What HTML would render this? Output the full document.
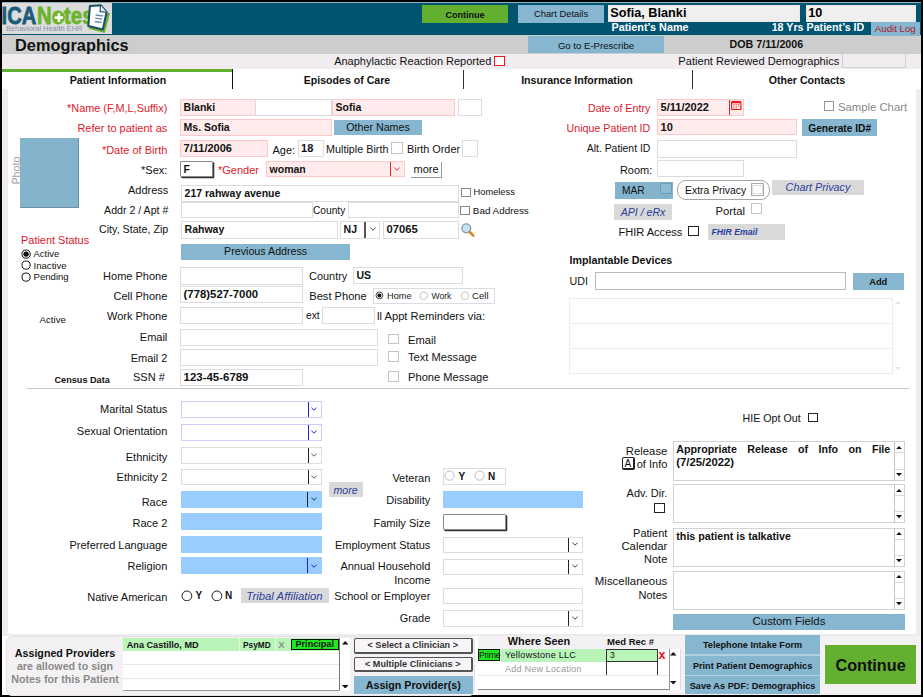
<!DOCTYPE html><html><head><meta charset="utf-8"><title>Demographics</title><style>
html,body{margin:0;padding:0;background:#000;}
body{width:923px;height:697px;position:relative;overflow:hidden;font-family:"Liberation Sans",sans-serif;color:#111;}
.a{position:absolute;box-sizing:content-box;}
.t{white-space:nowrap;}
.b{font-weight:bold;}
.i{font-style:italic;}
.w{color:#fff;}
.r{color:#e0182d;}
.bl{color:#2b3d9c;}
.f{border:1px solid #dcdce0;background:#fff;padding:0;text-indent:2.6px;white-space:nowrap;overflow:hidden;}
.p{background:#ffebeb;border-color:#fcc8c8;}
.hf{border:1px solid #e8e8e8;background:#efefef;text-indent:1.3px;font-weight:bold;white-space:nowrap;overflow:hidden;color:#000}
.inset{border:1px solid #8a8a8a;box-shadow:1.3px 1.3px 0 #333;background:#fff;text-indent:2.5px;white-space:nowrap;margin:0;border-radius:1px}
.btn{text-align:center;white-space:nowrap;overflow:hidden;}
.bb{background:#86b6d0;}
.bg{background:#63af30;}
.ta{border:1px solid #d2d2d2;background:#fff;overflow:hidden;}
.tat{position:absolute;left:2.5px;top:1px;width:214px;font-size:10.7px;font-weight:bold;line-height:13.5px;text-align:justify;text-align-last:justify;}
</style></head><body>
<div class="a " style="left:0px;top:0px;width:923px;height:697px;background:#000"></div>
<div class="a " style="left:2px;top:2px;width:919px;height:692.5px;background:#fff"></div>
<div class="a " style="left:2px;top:2px;width:919px;height:33px;background:#00546f"></div>
<div class="a " style="left:2px;top:2px;width:919px;height:1px;background:#8fb0bd"></div>
<div class="a " style="left:2px;top:35px;width:919px;height:19px;background:#cdcdcd"></div>
<div class="a " style="left:2px;top:54px;width:919px;height:15px;background:#f0ecf0"></div>
<div class="a " style="left:2px;top:89px;width:6px;height:605.5px;background:#f0ecf0"></div>
<div class="a " style="left:916px;top:89px;width:5px;height:547px;background:#f0ecf0"></div>
<div class="a " style="left:2px;top:634px;width:919px;height:2px;background:#ececec"></div>
<div class="a " style="left:2px;top:3px;width:110px;height:30.5px;background:#dcdcdc"></div>
<svg class="a" style="left:2px;top:3px" width="110" height="31" viewBox="2 3 110 31">
<g font-family="Liberation Sans, sans-serif" font-weight="bold" font-size="23.6">
<text x="1.6" y="24" fill="#1b5b79" stroke="#1b5b79" stroke-width="0.8" textLength="34.6" lengthAdjust="spacingAndGlyphs">ICA</text>
<text x="37" y="24" fill="#6cb42c" stroke="#6cb42c" stroke-width="0.8" textLength="56.5" lengthAdjust="spacingAndGlyphs">Notes</text>
</g>
<circle cx="58.9" cy="17.6" r="6" fill="#6cb42c"/>
<path d="M54.7 17.6h8.4M58.9 13.2v8.8" stroke="#fff" stroke-width="2.7"/>
<text x="5.9" y="30.8" font-family="Liberation Sans, sans-serif" font-size="7.6" fill="#8d8fab" textLength="76.5" lengthAdjust="spacingAndGlyphs">Behavioral Health EHR</text>
<path d="M107.5 12.5 L110 13.2 L104.8 33 L88.5 28.8 L89 27" fill="#6cb42c"/>
<path d="M89.9 6 L100.6 5.2 L106.6 12.3 L102.8 29.4 L88.3 26 Z" fill="#fff" stroke="#1a4f6e" stroke-width="2.1" stroke-linejoin="round"/>
<path d="M100.6 5.2 L100 11.6 L106.6 12.3" fill="#e4ecf2" stroke="#1a4f6e" stroke-width="1.1" stroke-linejoin="round"/>
<path d="M95.6 15 L102.8 16 M95.2 18.2 L102.2 19.2 M94.8 21.5 L101.6 22.5" stroke="#5f8fb6" stroke-width="1.3"/>
</svg>
<div class="a btn bg b" style="left:422px;top:4.5px;width:86px;height:18.8px;line-height:18.8px;font-size:9px;line-height:20px">Continue</div>
<div class="a btn bb" style="left:518px;top:4.5px;width:86px;height:18.8px;line-height:18.8px;font-size:9.4px;">Chart Details</div>
<div class="a hf" style="left:608px;top:4.5px;width:190px;height:15px;line-height:15px;font-size:12.7px;">Sofia, Blanki</div>
<div class="a hf" style="left:806px;top:4.5px;width:108px;height:15px;line-height:15px;font-size:12.7px;">10</div>
<div class="a t b w" style="left:611.5px;top:20.3px;height:14px;line-height:14px;font-size:10.8px;">Patient’s Name</div>
<div class="a t b w" style="right:58.7px;top:20.3px;height:14px;line-height:14px;font-size:10.7px;">18 Yrs Patient’s ID</div>
<div class="a btn bb" style="left:871px;top:22px;width:48.5px;height:13.5px;line-height:13.5px;font-size:9.7px;color:#b01828">Audit Log</div>
<div class="a t b" style="left:15px;top:37.5px;height:14px;line-height:14px;font-size:16.3px;height:20px;line-height:20px;top:35px;color:#111;letter-spacing:0.05px">Demographics</div>
<div class="a btn bb" style="left:528px;top:36px;width:136px;height:17px;line-height:17px;font-size:9.6px;line-height:19px">Go to E-Prescribe</div>
<div class="a t b" style="left:729.5px;top:37px;height:14px;line-height:14px;font-size:10.7px;">DOB 7/11/2006</div>
<div class="a t " style="right:431.7px;top:54px;height:14px;line-height:14px;font-size:11px;">Anaphylactic Reaction Reported</div>
<div class="a" style="left:494px;top:56px;width:8.6px;height:8.4px;border:1.4px solid #f01818;background:#fff"></div>
<div class="a t " style="right:83.7px;top:54px;height:14px;line-height:14px;font-size:11.1px;">Patient Reviewed Demographics</div>
<div class="a" style="left:841.5px;top:53px;width:62px;height:13px;border:1px solid #cfcfcf;background:#f0ecf0"></div>
<div class="a " style="left:2px;top:69px;width:230px;height:2.5px;background:#63af30"></div>
<div class="a " style="left:232px;top:69px;width:1px;height:20px;background:#111"></div>
<div class="a " style="left:462.5px;top:69.5px;width:1px;height:19px;background:#333"></div>
<div class="a " style="left:692px;top:69.5px;width:1px;height:19px;background:#333"></div>
<div class="a t b" style="left:-32px;width:300px;text-align:center;top:73.2px;height:14px;line-height:14px;font-size:10.6px;">Patient Information</div>
<div class="a t b" style="left:197px;width:300px;text-align:center;top:73.2px;height:14px;line-height:14px;font-size:10.6px;">Episodes of Care</div>
<div class="a t b" style="left:427px;width:300px;text-align:center;top:73.2px;height:14px;line-height:14px;font-size:10.65px;">Insurance Information</div>
<div class="a t b" style="left:657px;width:300px;text-align:center;top:73.2px;height:14px;line-height:14px;font-size:10.6px;">Other Contacts</div>
<div class="a t r" style="right:755.7px;top:101px;height:14px;line-height:14px;font-size:10.9px;">*Name (F,M,L,Suffix)</div>
<div class="a t r" style="right:755.7px;top:121px;height:14px;line-height:14px;font-size:11px;">Refer to patient as</div>
<div class="a t r" style="right:755.7px;top:142.5px;height:14px;line-height:14px;font-size:11px;">*Date of Birth</div>
<div class="a t " style="right:755.7px;top:162.5px;height:14px;line-height:14px;font-size:11px;color:#111">*Sex:</div>
<div class="a t " style="right:754.7px;top:182.5px;height:14px;line-height:14px;font-size:11px;">Address</div>
<div class="a t " style="right:754.7px;top:202.5px;height:14px;line-height:14px;font-size:10.6px;">Addr 2 / Apt #</div>
<div class="a t " style="right:754.7px;top:222.3px;height:14px;line-height:14px;font-size:10.7px;">City, State, Zip</div>
<div class="a f p b" style="left:180px;top:99.2px;width:73.5px;height:14.8px;line-height:14.8px;font-size:10.5px;">Blanki</div>
<div class="a f" style="left:255px;top:99.2px;width:75px;height:14.8px;line-height:14.8px;font-size:10.5px;"></div>
<div class="a f p b" style="left:332px;top:99.2px;width:121px;height:14.8px;line-height:14.8px;font-size:10.5px;">Sofia</div>
<div class="a f" style="left:458px;top:99.2px;width:22px;height:14.8px;line-height:14.8px;font-size:10.5px;"></div>
<div class="a f p b" style="left:180px;top:119.2px;width:150px;height:14.8px;line-height:14.8px;font-size:10.5px;">Ms. Sofia</div>
<div class="a btn bb" style="left:334px;top:119.5px;width:88px;height:15.8px;line-height:15.8px;font-size:10.7px;">Other Names</div>
<div class="a f p b" style="left:180px;top:140.4px;width:86px;height:15.1px;line-height:15.1px;font-size:11px;">7/11/2006</div>
<div class="a t " style="left:272.5px;top:143px;height:14px;line-height:14px;font-size:11px;">Age:</div>
<div class="a f b" style="left:297.5px;top:140.4px;width:24px;height:15.1px;line-height:15.1px;font-size:11px;">18</div>
<div class="a t " style="left:326px;top:141.5px;height:14px;line-height:14px;font-size:10.8px;">Multiple Birth</div>
<div class="a" style="left:391.4px;top:142.3px;width:9.6px;height:9.3px;border:1px solid #c4c4c4;background:#fff"></div>
<div class="a t " style="left:407px;top:141.8px;height:14px;line-height:14px;font-size:10.85px;">Birth Order</div>
<div class="a f" style="left:462px;top:140.4px;width:14px;height:15.1px;line-height:15.1px;font-size:10.5px;"></div>
<div class="a inset b" style="left:180px;top:160.5px;width:30.5px;height:14px;line-height:14px;font-size:10.5px;line-height:15.5px">F</div>
<div class="a t r" style="left:218px;top:163px;height:14px;line-height:14px;font-size:11px;">*Gender</div>
<div class="a f p b" style="left:266px;top:160.5px;width:137px;height:14.5px;line-height:14.5px;font-size:10.5px;">woman</div>
<div class="a " style="left:389.8px;top:161.5px;width:1px;height:14.5px;background:#e03030"></div>
<svg class="a" style="left:394px;top:166.55px" width="6" height="4" viewBox="0 0 6 4"><path d="M0.4 0.7 L3 3.2 L5.6 0.7" fill="none" stroke="#e03030" stroke-width="1"/></svg>
<div class="a t" style="left:411px;top:162px;width:30px;height:14.5px;line-height:15.5px;font-size:11px;text-align:center;border-right:1px solid #999;border-bottom:1px solid #999;">more</div>
<div class="a " style="left:19.5px;top:138px;width:59.5px;height:69.5px;background:#84b4cc;box-shadow:inset -1px -1px 0 #6f8fa2"></div>
<div class="a t" style="left:-4px;top:164px;width:40px;height:13px;line-height:13px;text-align:center;font-size:10.8px;color:#a2a2a2;transform:rotate(-90deg)">Photo</div>
<div class="a f b" style="left:181px;top:185.3px;width:275.6px;height:14.5px;line-height:14.5px;font-size:10.5px;line-height:15.5px">217 rahway avenue</div>
<div class="a" style="left:461px;top:187.5px;width:7.5px;height:7.5px;border:1px solid #888;background:#fff"></div>
<div class="a t " style="left:473.5px;top:185px;height:14px;line-height:14px;font-size:9.3px;">Homeless</div>
<div class="a f" style="left:181px;top:202.3px;width:130px;height:13.5px;line-height:13.5px;font-size:10.5px;"></div>
<div class="a t " style="left:313px;top:203.5px;height:14px;line-height:14px;font-size:10.2px;">County</div>
<div class="a f" style="left:348px;top:202.3px;width:108.6px;height:13.5px;line-height:13.5px;font-size:10.5px;"></div>
<div class="a" style="left:460.2px;top:205.6px;width:7.4px;height:7.3px;border:1px solid #888;background:#fff"></div>
<div class="a t " style="left:472.8px;top:204.2px;height:14px;line-height:14px;font-size:9.9px;">Bad Address</div>
<div class="a f b" style="left:181px;top:221px;width:155px;height:15.8px;line-height:15.8px;font-size:10.5px;">Rahway</div>
<div class="a f b" style="left:340px;top:221px;width:38px;height:15.8px;line-height:15.8px;font-size:10.5px;">NJ</div>
<div class="a " style="left:364.2px;top:222px;width:1.4px;height:15.8px;background:#555"></div>
<svg class="a" style="left:369.6px;top:227.3px" width="6" height="4" viewBox="0 0 6 4"><path d="M0.4 0.7 L3 3.2 L5.6 0.7" fill="none" stroke="#444" stroke-width="1"/></svg>
<div class="a f b" style="left:383px;top:221px;width:73.6px;height:15.8px;line-height:15.8px;font-size:11.2px;">07065</div>
<svg class="a" style="left:460px;top:222px" width="17" height="17" viewBox="0 0 17 17">
<circle cx="6.3" cy="6.3" r="4.4" fill="#c4e2f6" stroke="#8a9eb2" stroke-width="1.4"/>
<path d="M9.8 10 L13.3 13.6" stroke="#d98a1e" stroke-width="2.6" stroke-linecap="round"/></svg>
<div class="a t r" style="left:21px;top:233px;height:14px;line-height:14px;font-size:10.95px;">Patient Status</div>
<svg class="a" style="left:20.7px;top:248.9px" width="10.2" height="10.2"><circle cx="5.1" cy="5.1" r="4.1" fill="#fff" stroke="#111" stroke-width="1"/><circle cx="5.1" cy="5.1" r="2.6999999999999997" fill="#111"/></svg>
<svg class="a" style="left:20.7px;top:260.3px" width="10.2" height="10.2"><circle cx="5.1" cy="5.1" r="4.1" fill="#fff" stroke="#111" stroke-width="1"/></svg>
<svg class="a" style="left:20.7px;top:271.8px" width="10.2" height="10.2"><circle cx="5.1" cy="5.1" r="4.1" fill="#fff" stroke="#111" stroke-width="1"/></svg>
<div class="a t " style="left:33.5px;top:247.2px;height:14px;line-height:14px;font-size:9.5px;">Active</div>
<div class="a t " style="left:33.5px;top:258.6px;height:14px;line-height:14px;font-size:9.6px;">Inactive</div>
<div class="a t " style="left:33.5px;top:270px;height:14px;line-height:14px;font-size:9.6px;">Pending</div>
<div class="a t " style="left:39.5px;top:313px;height:14px;line-height:14px;font-size:9.7px;">Active</div>
<div class="a t b" style="left:54.5px;top:372.5px;height:14px;line-height:14px;font-size:9.15px;">Census Data</div>
<div class="a btn bb" style="left:181.3px;top:244px;width:168.7px;height:15.7px;line-height:15.7px;font-size:10.7px;">Previous Address</div>
<div class="a t " style="right:755.7px;top:268.5px;height:14px;line-height:14px;font-size:11px;">Home Phone</div>
<div class="a t " style="right:755.7px;top:288.5px;height:14px;line-height:14px;font-size:11px;">Cell Phone</div>
<div class="a t " style="right:755.7px;top:308.5px;height:14px;line-height:14px;font-size:11px;">Work Phone</div>
<div class="a t " style="right:755.7px;top:330px;height:14px;line-height:14px;font-size:11px;">Email</div>
<div class="a t " style="right:755.7px;top:351px;height:14px;line-height:14px;font-size:11px;">Email 2</div>
<div class="a t " style="right:758.2px;top:369.5px;height:14px;line-height:14px;font-size:11px;">SSN #</div>
<div class="a f" style="left:180px;top:267px;width:121px;height:15.6px;line-height:15.6px;font-size:10.5px;"></div>
<div class="a f b" style="left:180px;top:286px;width:121px;height:15.2px;line-height:15.2px;font-size:11.35px;">(778)527-7000</div>
<div class="a f" style="left:180px;top:307px;width:121px;height:15px;line-height:15px;font-size:10.5px;"></div>
<div class="a f" style="left:180px;top:328.5px;width:196px;height:15.2px;line-height:15.2px;font-size:10.5px;"></div>
<div class="a f" style="left:180px;top:349px;width:196px;height:15.3px;line-height:15.3px;font-size:10.5px;"></div>
<div class="a f b" style="left:180px;top:369px;width:121px;height:15px;line-height:15px;font-size:11.45px;">123-45-6789</div>
<div class="a t " style="left:309px;top:269px;height:14px;line-height:14px;font-size:10.95px;">Country</div>
<div class="a f b" style="left:352.8px;top:267.3px;width:108.7px;height:15px;line-height:15px;font-size:10.5px;">US</div>
<div class="a t " style="left:309.3px;top:289px;height:14px;line-height:14px;font-size:11.1px;">Best Phone</div>
<div class="a f" style="left:372.5px;top:287.5px;width:120px;height:14px;line-height:14px;font-size:10.5px;"></div>
<svg class="a" style="left:375.1px;top:291.1px" width="8.8" height="8.8"><circle cx="4.4" cy="4.4" r="3.4" fill="#fff" stroke="#444" stroke-width="1"/><circle cx="4.4" cy="4.4" r="2.0" fill="#111"/></svg>
<div class="a t " style="left:387px;top:288.5px;height:14px;line-height:14px;font-size:9.2px;color:#222">Home</div>
<svg class="a" style="left:419.2px;top:290.7px" width="9.6" height="9.6"><circle cx="4.8" cy="4.8" r="3.8" fill="#fff" stroke="#c4c4c4" stroke-width="1"/></svg>
<div class="a t " style="left:431.5px;top:288.5px;height:14px;line-height:14px;font-size:8.6px;color:#222">Work</div>
<svg class="a" style="left:460.2px;top:290.7px" width="9.6" height="9.6"><circle cx="4.8" cy="4.8" r="3.8" fill="#fff" stroke="#c4c4c4" stroke-width="1"/></svg>
<div class="a t " style="left:472px;top:288.5px;height:14px;line-height:14px;font-size:9.6px;color:#222">Cell</div>
<div class="a t " style="left:306px;top:309px;height:14px;line-height:14px;font-size:10.2px;">ext</div>
<div class="a f" style="left:321.5px;top:307px;width:51.5px;height:15px;line-height:15px;font-size:10.5px;"></div>
<div class="a t " style="left:377px;top:309px;height:14px;line-height:14px;font-size:11.2px;">ll Appt Reminders via:</div>
<div class="a" style="left:388px;top:334px;width:9px;height:8.4px;border:1px solid #c4c4c4;background:#fff"></div>
<div class="a" style="left:388px;top:351.2px;width:9px;height:8.6px;border:1px solid #c4c4c4;background:#fff"></div>
<div class="a" style="left:388px;top:371.2px;width:9px;height:8.4px;border:1px solid #c4c4c4;background:#fff"></div>
<div class="a t " style="left:408px;top:333px;height:14px;line-height:14px;font-size:11.15px;">Email</div>
<div class="a t " style="left:408px;top:350.2px;height:14px;line-height:14px;font-size:11.15px;">Text Message</div>
<div class="a t " style="left:408px;top:370px;height:14px;line-height:14px;font-size:11.15px;">Phone Message</div>
<div class="a " style="left:27px;top:388px;width:882px;height:1px;background:#c8c8c8"></div>
<div class="a t r" style="right:272.7px;top:100.5px;height:14px;line-height:14px;font-size:10.7px;">Date of Entry</div>
<div class="a f p b" style="left:657px;top:99px;width:85px;height:15px;line-height:15px;font-size:11px;">5/11/2022</div>
<div class="a " style="left:729px;top:100px;width:1px;height:15px;background:#e82020"></div>
<svg class="a" style="left:731.3px;top:100.8px" width="10.6" height="9.4" viewBox="0 0 10.6 9.4">
<rect x="0.6" y="0.6" width="9.3" height="8.1" rx="1" fill="#fff4f4" stroke="#f41414" stroke-width="1.2"/><rect x="0.6" y="0.4" width="9.3" height="1.9" rx="0.6" fill="#f41414"/>
<path d="M2.4 3.6h1.1M4.7 3.6h1.1M7 3.6h1.1M2.4 5.3h1.1M4.7 5.3h1.1M7 5.3h1.1M2.4 7h1.1M4.7 7h1.1" stroke="#f43030" stroke-width="1"/></svg>
<div class="a" style="left:824.2px;top:101.2px;width:7.9px;height:7.6px;border:1.2px solid #969696;background:#fff"></div>
<div class="a t " style="left:838px;top:100px;height:14px;line-height:14px;font-size:11.3px;color:#8a8a8a">Sample Chart</div>
<div class="a t r" style="right:272.7px;top:120.5px;height:14px;line-height:14px;font-size:10.7px;">Unique Patient ID</div>
<div class="a f p b" style="left:657px;top:119px;width:138px;height:14px;line-height:14px;font-size:11px;">10</div>
<div class="a btn bb b" style="left:802px;top:119.1px;width:75.3px;height:16.7px;line-height:16.7px;font-size:10.2px;line-height:19.2px">Generate ID#</div>
<div class="a t " style="right:272.7px;top:141.5px;height:14px;line-height:14px;font-size:10.4px;">Alt. Patient ID</div>
<div class="a f" style="left:657px;top:140.3px;width:138px;height:15.4px;line-height:15.4px;font-size:10.5px;"></div>
<div class="a t " style="right:270.7px;top:162.5px;height:14px;line-height:14px;font-size:11px;">Room:</div>
<div class="a f" style="left:657px;top:160px;width:85px;height:15.2px;line-height:15.2px;font-size:10.5px;"></div>
<div class="a " style="left:614.5px;top:182px;width:58px;height:16.5px;background:#84b4cc"></div>
<div class="a t " style="left:622px;top:183.5px;height:14px;line-height:14px;font-size:10.2px;">MAR</div>
<div class="a" style="left:660.3px;top:183.4px;width:9.3px;height:8.6px;border:1px solid #6f9db6;background:#8cbad2"></div>
<div class="a" style="left:677px;top:179.5px;width:91px;height:18px;border:1px solid #a4a4a4;border-radius:9px;background:#fff"></div>
<div class="a t " style="left:685px;top:183.5px;height:14px;line-height:14px;font-size:10.4px;">Extra Privacy</div>
<div class="a" style="left:750.5px;top:183px;width:11.5px;height:10.5px;border:1px solid #aaa;background:#fff"></div>
<div class="a" style="left:752px;top:184.5px;width:8.5px;height:7.5px;border:1px solid #ddd;background:#fff"></div>
<div class="a " style="left:772px;top:179.5px;width:92px;height:15px;background:#d9d9d9"></div>
<div class="a t i bl" style="left:668px;width:300px;text-align:center;top:179.5px;height:14px;line-height:14px;font-size:10.8px;">Chart Privacy</div>
<div class="a " style="left:614px;top:204px;width:58.4px;height:16px;background:#d9d9d9"></div>
<div class="a t i bl" style="left:493px;width:300px;text-align:center;top:204.8px;height:14px;line-height:14px;font-size:10.6px;">API / eRx</div>
<div class="a t " style="left:715.5px;top:203.5px;height:14px;line-height:14px;font-size:11.3px;">Portal</div>
<div class="a" style="left:751.2px;top:203.3px;width:8.8px;height:8.7px;border:1px solid #c4c4c4;background:#fff"></div>
<div class="a t " style="left:618.5px;top:225.3px;height:14px;line-height:14px;font-size:11.05px;">FHIR Access</div>
<div class="a" style="left:688.3px;top:226px;width:8.8px;height:8.4px;border:1.3px solid #222;background:#fff"></div>
<div class="a " style="left:707.5px;top:223.5px;width:77px;height:16px;background:#d9d9d9"></div>
<div class="a t i bl b" style="left:711.5px;top:225px;height:14px;line-height:14px;font-size:8.7px;">FHIR Email</div>
<div class="a t b" style="left:569.5px;top:252.5px;height:14px;line-height:14px;font-size:10.7px;">Implantable Devices</div>
<div class="a t " style="left:569.5px;top:273.5px;height:14px;line-height:14px;font-size:10.7px;">UDI</div>
<div class="a f" style="left:594.5px;top:271.5px;width:249.5px;height:16.5px;line-height:16.5px;font-size:10.5px;border-color:#bbb"></div>
<div class="a btn bb b" style="left:853px;top:272.5px;width:50.5px;height:17.5px;line-height:17.5px;font-size:9.3px;line-height:19px">Add</div>
<div class="a " style="left:569px;top:297.5px;width:324px;height:1px;background:#ececec"></div>
<div class="a " style="left:569px;top:322.5px;width:324px;height:1px;background:#ececec"></div>
<div class="a " style="left:569px;top:348px;width:324px;height:1px;background:#ececec"></div>
<div class="a " style="left:569px;top:373px;width:324px;height:1px;background:#ececec"></div>
<div class="a " style="left:569px;top:297.5px;width:1px;height:75.5px;background:#ececec"></div>
<div class="a " style="left:892px;top:297.5px;width:1px;height:75.5px;background:#ececec"></div>
<svg class="a" style="left:894.5px;top:301px" width="6" height="3"><polygon points="0,3 3.0,0 6,3" fill="#e4e4e4"/></svg>
<svg class="a" style="left:894.5px;top:366.5px" width="6" height="3"><polygon points="0,0 3.0,3 6,0" fill="#e4e4e4"/></svg>
<div class="a t " style="right:755.7px;top:402px;height:14px;line-height:14px;font-size:11px;">Marital Status</div>
<div class="a f" style="left:181px;top:400.5px;width:139px;height:15px;line-height:15px;font-size:10.5px;border-color:#ccccff"></div>
<div class="a " style="left:307.5px;top:401.5px;width:1px;height:15px;background:#2020e0"></div>
<svg class="a" style="left:311.35px;top:406.8px" width="6" height="4" viewBox="0 0 6 4"><path d="M0.4 0.7 L3 3.2 L5.6 0.7" fill="none" stroke="#2020e0" stroke-width="1"/></svg>
<div class="a t " style="right:755.7px;top:424px;height:14px;line-height:14px;font-size:11px;">Sexual Orientation</div>
<div class="a f" style="left:181px;top:423.5px;width:139px;height:15px;line-height:15px;font-size:10.5px;border-color:#ccccff"></div>
<div class="a " style="left:307.5px;top:424.5px;width:1px;height:15px;background:#2020e0"></div>
<svg class="a" style="left:311.35px;top:429.8px" width="6" height="4" viewBox="0 0 6 4"><path d="M0.4 0.7 L3 3.2 L5.6 0.7" fill="none" stroke="#2020e0" stroke-width="1"/></svg>
<div class="a t " style="right:755.7px;top:450px;height:14px;line-height:14px;font-size:11px;">Ethnicity</div>
<div class="a f" style="left:181px;top:446.5px;width:139px;height:15px;line-height:15px;font-size:10.5px;"></div>
<div class="a " style="left:307.5px;top:447.5px;width:1px;height:15px;background:#222"></div>
<svg class="a" style="left:311.35px;top:452.8px" width="6" height="4" viewBox="0 0 6 4"><path d="M0.4 0.7 L3 3.2 L5.6 0.7" fill="none" stroke="#555" stroke-width="1"/></svg>
<div class="a t " style="right:755.7px;top:470px;height:14px;line-height:14px;font-size:11px;">Ethnicity 2</div>
<div class="a f" style="left:181px;top:468.5px;width:139px;height:14.5px;line-height:14.5px;font-size:10.5px;"></div>
<div class="a " style="left:307.5px;top:469.5px;width:1px;height:14.5px;background:#222"></div>
<svg class="a" style="left:311.35px;top:474.55px" width="6" height="4" viewBox="0 0 6 4"><path d="M0.4 0.7 L3 3.2 L5.6 0.7" fill="none" stroke="#555" stroke-width="1"/></svg>
<div class="a t " style="right:755.7px;top:494.5px;height:14px;line-height:14px;font-size:11px;">Race</div>
<div class="a " style="left:181px;top:491px;width:141px;height:16.5px;background:#99ccff"></div>
<div class="a " style="left:307.2px;top:492px;width:1px;height:14.5px;background:#222"></div>
<svg class="a" style="left:311px;top:497.25px" width="6" height="4" viewBox="0 0 6 4"><path d="M0.4 0.7 L3 3.2 L5.6 0.7" fill="none" stroke="#333" stroke-width="1"/></svg>
<div class="a t " style="right:755.7px;top:516px;height:14px;line-height:14px;font-size:11px;">Race 2</div>
<div class="a " style="left:181px;top:513px;width:141px;height:17px;background:#99ccff"></div>
<div class="a t " style="right:755.7px;top:538px;height:14px;line-height:14px;font-size:11px;">Preferred Language</div>
<div class="a " style="left:181px;top:535.7px;width:141px;height:17.1px;background:#99ccff"></div>
<div class="a t " style="right:755.7px;top:558.5px;height:14px;line-height:14px;font-size:11px;">Religion</div>
<div class="a " style="left:181px;top:557px;width:141px;height:17.2px;background:#99ccff"></div>
<div class="a " style="left:307.2px;top:558px;width:1px;height:15.2px;background:#2020e0"></div>
<svg class="a" style="left:311px;top:563.6px" width="6" height="4" viewBox="0 0 6 4"><path d="M0.4 0.7 L3 3.2 L5.6 0.7" fill="none" stroke="#2020e0" stroke-width="1"/></svg>
<div class="a t " style="right:755.7px;top:589.5px;height:14px;line-height:14px;font-size:11px;">Native American</div>
<svg class="a" style="left:181.1px;top:589.6px" width="11.8" height="11.8"><circle cx="5.9" cy="5.9" r="4.9" fill="#fff" stroke="#222" stroke-width="1"/></svg>
<div class="a t b" style="left:195.5px;top:588.5px;height:14px;line-height:14px;font-size:10px;">Y</div>
<svg class="a" style="left:210.8px;top:589.6px" width="11.8" height="11.8"><circle cx="5.9" cy="5.9" r="4.9" fill="#fff" stroke="#222" stroke-width="1"/></svg>
<div class="a t b" style="left:225px;top:588.5px;height:14px;line-height:14px;font-size:10px;">N</div>
<div class="a " style="left:241.2px;top:588.3px;width:87.8px;height:15.2px;background:#d9d9d9"></div>
<div class="a t i bl" style="left:134.5px;width:300px;text-align:center;top:589px;height:14px;line-height:14px;font-size:11.35px;">Tribal Affiliation</div>
<div class="a " style="left:328.5px;top:481.8px;width:34px;height:15.2px;background:#d9d9d9"></div>
<div class="a t i bl" style="left:195.5px;width:300px;text-align:center;top:483.3px;height:14px;line-height:14px;font-size:10.6px;">more</div>
<div class="a t " style="right:492.7px;top:471px;height:14px;line-height:14px;font-size:11px;">Veteran</div>
<div class="a f" style="left:442.9px;top:468px;width:61.6px;height:15px;line-height:15px;font-size:10.5px;"></div>
<svg class="a" style="left:444.4px;top:470.4px" width="11.2" height="11.2"><circle cx="5.6" cy="5.6" r="4.6" fill="#fff" stroke="#bbb" stroke-width="1"/></svg>
<div class="a t b" style="left:458.5px;top:469.5px;height:14px;line-height:14px;font-size:10px;">Y</div>
<svg class="a" style="left:473.9px;top:470.4px" width="11.2" height="11.2"><circle cx="5.6" cy="5.6" r="4.6" fill="#fff" stroke="#bbb" stroke-width="1"/></svg>
<div class="a t b" style="left:488px;top:469.5px;height:14px;line-height:14px;font-size:10px;">N</div>
<div class="a t " style="right:492.7px;top:493px;height:14px;line-height:14px;font-size:11px;">Disability</div>
<div class="a " style="left:442.9px;top:491px;width:140.1px;height:16.5px;background:#99ccff"></div>
<div class="a t " style="right:492.7px;top:515.5px;height:14px;line-height:14px;font-size:11px;">Family Size</div>
<div class="a inset" style="left:442.9px;top:513.5px;width:61.6px;height:14px;line-height:14px;font-size:10.5px;"></div>
<div class="a t " style="right:492.7px;top:537.5px;height:14px;line-height:14px;font-size:11px;">Employment Status</div>
<div class="a f" style="left:442.9px;top:536.5px;width:138.1px;height:14px;line-height:14px;font-size:10.5px;"></div>
<div class="a " style="left:567.8px;top:537.5px;width:1px;height:14px;background:#222"></div>
<svg class="a" style="left:572px;top:542.3px" width="6" height="4" viewBox="0 0 6 4"><path d="M0.4 0.7 L3 3.2 L5.6 0.7" fill="none" stroke="#444" stroke-width="1"/></svg>
<div class="a t " style="right:492.7px;top:559px;height:14px;line-height:14px;font-size:11px;">Annual Household</div>
<div class="a t " style="right:492.7px;top:573px;height:14px;line-height:14px;font-size:11px;">Income</div>
<div class="a f" style="left:442.9px;top:558.5px;width:138.1px;height:14px;line-height:14px;font-size:10.5px;"></div>
<div class="a " style="left:567.8px;top:559.5px;width:1px;height:14px;background:#222"></div>
<svg class="a" style="left:572px;top:564.3px" width="6" height="4" viewBox="0 0 6 4"><path d="M0.4 0.7 L3 3.2 L5.6 0.7" fill="none" stroke="#444" stroke-width="1"/></svg>
<div class="a t " style="right:492.7px;top:589px;height:14px;line-height:14px;font-size:11px;">School or Employer</div>
<div class="a f" style="left:442.9px;top:588px;width:138.1px;height:14px;line-height:14px;font-size:10.5px;"></div>
<div class="a t " style="right:492.7px;top:610.5px;height:14px;line-height:14px;font-size:11px;">Grade</div>
<div class="a f" style="left:442.9px;top:609.5px;width:138.1px;height:15px;line-height:15px;font-size:10.5px;"></div>
<div class="a " style="left:567.8px;top:610.5px;width:1px;height:15px;background:#222"></div>
<svg class="a" style="left:572px;top:615.8px" width="6" height="4" viewBox="0 0 6 4"><path d="M0.4 0.7 L3 3.2 L5.6 0.7" fill="none" stroke="#444" stroke-width="1"/></svg>
<div class="a t " style="left:742.5px;top:410.5px;height:14px;line-height:14px;font-size:10.7px;">HIE Opt Out</div>
<div class="a" style="left:807.5px;top:412.5px;width:8.5px;height:7.5px;border:1px solid #222;background:#fff"></div>
<div class="a t " style="right:255.7px;top:443.5px;height:14px;line-height:14px;font-size:11.3px;">Release</div>
<div class="a t " style="right:255.7px;top:456.5px;height:14px;line-height:14px;font-size:11px;">of Info</div>
<div class="a t" style="left:621.5px;top:456.5px;width:10.5px;height:10.5px;line-height:11px;text-align:center;font-size:10px;border:1px solid #222;border-right-width:2px;border-bottom-width:2px;border-radius:2px;background:#fff">A</div>
<div class="a ta" style="left:672.8px;top:441px;width:230.20000000000005px;height:37.5px"><div class="tat">Appropriate Release of Info on File<br><span style="display:block;text-align:left;text-align-last:left;margin-top:-0.5px;font-size:11.3px">(7/25/2022)</span></div></div>
<div class="a " style="left:893.5px;top:442px;width:1px;height:37.5px;background:#c4c4c4"></div>
<div class="a " style="left:894.5px;top:452px;width:9.5px;height:1px;background:#d8d8d8"></div>
<div class="a " style="left:894.5px;top:468.5px;width:9.5px;height:1px;background:#d8d8d8"></div>
<svg class="a" style="left:896.2px;top:445.6px" width="6" height="3.2"><polygon points="0,3.2 3.0,0 6,3.2" fill="#111"/></svg>
<svg class="a" style="left:896.2px;top:472.9px" width="6" height="3.2"><polygon points="0,0 3.0,3.2 6,0" fill="#111"/></svg>
<div class="a t " style="right:255.7px;top:485.5px;height:14px;line-height:14px;font-size:11px;">Adv. Dir.</div>
<div class="a" style="left:654px;top:503px;width:9px;height:8px;border:1px solid #222;background:#fff"></div>
<div class="a ta" style="left:672.8px;top:484px;width:230.20000000000005px;height:37px"><div class="tat"></div></div>
<div class="a " style="left:893.5px;top:485px;width:1px;height:37px;background:#c4c4c4"></div>
<div class="a " style="left:894.5px;top:495px;width:9.5px;height:1px;background:#d8d8d8"></div>
<div class="a " style="left:894.5px;top:511px;width:9.5px;height:1px;background:#d8d8d8"></div>
<svg class="a" style="left:896.2px;top:488.6px" width="6" height="3.2"><polygon points="0,3.2 3.0,0 6,3.2" fill="#111"/></svg>
<svg class="a" style="left:896.2px;top:515.4px" width="6" height="3.2"><polygon points="0,0 3.0,3.2 6,0" fill="#111"/></svg>
<div class="a t " style="right:255.7px;top:525.5px;height:14px;line-height:14px;font-size:11px;">Patient</div>
<div class="a t " style="right:255.7px;top:538.5px;height:14px;line-height:14px;font-size:11.3px;">Calendar</div>
<div class="a t " style="right:255.7px;top:551.5px;height:14px;line-height:14px;font-size:11px;">Note</div>
<div class="a ta" style="left:672.8px;top:527.5px;width:230.20000000000005px;height:37.0px"><div class="tat"><span style="display:block;text-align:left;text-align-last:left">this patient is talkative</span></div></div>
<div class="a " style="left:893.5px;top:528.5px;width:1px;height:37px;background:#c4c4c4"></div>
<div class="a " style="left:894.5px;top:538.5px;width:9.5px;height:1px;background:#d8d8d8"></div>
<div class="a " style="left:894.5px;top:554.5px;width:9.5px;height:1px;background:#d8d8d8"></div>
<svg class="a" style="left:896.2px;top:532.1px" width="6" height="3.2"><polygon points="0,3.2 3.0,0 6,3.2" fill="#111"/></svg>
<svg class="a" style="left:896.2px;top:558.9px" width="6" height="3.2"><polygon points="0,0 3.0,3.2 6,0" fill="#111"/></svg>
<div class="a t " style="right:255.7px;top:574px;height:14px;line-height:14px;font-size:11.45px;">Miscellaneous</div>
<div class="a t " style="right:255.7px;top:587.5px;height:14px;line-height:14px;font-size:11px;">Notes</div>
<div class="a ta" style="left:672.8px;top:570.5px;width:230.20000000000005px;height:37.0px"><div class="tat"></div></div>
<div class="a " style="left:893.5px;top:571.5px;width:1px;height:37px;background:#c4c4c4"></div>
<div class="a " style="left:894.5px;top:581.5px;width:9.5px;height:1px;background:#d8d8d8"></div>
<div class="a " style="left:894.5px;top:597.5px;width:9.5px;height:1px;background:#d8d8d8"></div>
<svg class="a" style="left:896.2px;top:575.1px" width="6" height="3.2"><polygon points="0,3.2 3.0,0 6,3.2" fill="#111"/></svg>
<svg class="a" style="left:896.2px;top:601.9px" width="6" height="3.2"><polygon points="0,0 3.0,3.2 6,0" fill="#111"/></svg>
<div class="a btn bb" style="left:673px;top:614.4px;width:232px;height:15.6px;line-height:15.6px;font-size:11.4px;">Custom Fields</div>
<div class="a " style="left:2px;top:636px;width:919px;height:58.5px;background:#fff"></div>
<div class="a" style="left:6px;top:635.5px;width:467px;height:58px;background:#f4f1f4;border:1px solid #e6e2e6;border-radius:6px"></div>
<div class="a" style="left:478px;top:635.5px;width:443px;height:59px;background:#f4f1f4"></div>
<div class="a t b" style="left:-85px;width:300px;text-align:center;top:645.5px;height:14px;line-height:14px;font-size:10.7px;">Assigned Providers</div>
<div class="a t b" style="left:-85px;width:300px;text-align:center;top:659px;height:14px;line-height:14px;font-size:10.7px;color:#8a8a8a">are allowed to sign</div>
<div class="a t b" style="left:-85px;width:300px;text-align:center;top:672px;height:14px;line-height:14px;font-size:10.7px;color:#8a8a8a">Notes for this Patient</div>
<div class="a " style="left:123px;top:638px;width:227px;height:53px;background:#fff"></div>
<div class="a " style="left:339px;top:638px;width:1px;height:53px;background:#777"></div>
<div class="a " style="left:123px;top:690.3px;width:217px;height:1px;background:#999"></div>
<div class="a " style="left:123px;top:638px;width:216px;height:13px;background:#b9f5b9"></div>
<div class="a " style="left:238.5px;top:638px;width:1px;height:13px;background:#e4fce4"></div>
<div class="a " style="left:274.5px;top:638px;width:1px;height:13px;background:#e4fce4"></div>
<div class="a t b" style="left:126.8px;top:638px;height:14px;line-height:14px;font-size:9.1px;">Ana Castillo, MD</div>
<div class="a t b" style="left:243px;top:638px;height:14px;line-height:14px;font-size:8.3px;">PsyMD</div>
<div class="a t b" style="left:278.3px;top:638px;height:14px;line-height:14px;font-size:9.6px;color:#8a8a8a">X</div>
<div class="a t b" style="left:291px;top:638.6px;width:42px;height:9.6px;line-height:9.8px;font-size:9.1px;background:#1fe81f;border:1.4px solid #111;padding-left:3.5px;">Principal</div>
<div class="a " style="left:123px;top:664.3px;width:216px;height:1px;background:#e6e6e6"></div>
<div class="a " style="left:123px;top:677.8px;width:216px;height:1px;background:#e6e6e6"></div>
<svg class="a" style="left:342.05px;top:641px" width="6.5" height="3.6"><polygon points="0,3.6 3.25,0 6.5,3.6" fill="#111"/></svg>
<svg class="a" style="left:342.05px;top:684.5px" width="6.5" height="3.6"><polygon points="0,0 3.25,3.6 6.5,0" fill="#111"/></svg>
<div class="a t b" style="left:353.5px;top:638px;width:116.5px;height:12.5px;line-height:12.5px;font-size:9.1px;text-align:center;color:#333;background:#f8f5f8;border:1px solid #555;border-right-width:2px;border-bottom-width:2px;border-radius:2px">&lt; Select a Clinician &gt;</div>
<div class="a t b" style="left:353.5px;top:656.5px;width:116.5px;height:12.0px;line-height:12.0px;font-size:9.1px;text-align:center;color:#333;background:#f8f5f8;border:1px solid #555;border-right-width:2px;border-bottom-width:2px;border-radius:2px">&lt; Multiple Clinicians &gt;</div>
<div class="a btn bb b" style="left:353.5px;top:676px;width:119.5px;height:18px;line-height:18px;font-size:10.7px;">Assign Provider(s)</div>
<div class="a " style="left:478px;top:649px;width:202px;height:40.5px;background:#fff"></div>
<div class="a " style="left:668.6px;top:649px;width:1px;height:40.5px;background:#999"></div>
<div class="a " style="left:679.5px;top:649px;width:1px;height:40.5px;background:#ddd"></div>
<div class="a t b" style="left:389px;width:300px;text-align:center;top:634px;height:14px;line-height:14px;font-size:10.9px;">Where Seen</div>
<div class="a t b" style="left:607px;top:635px;height:14px;line-height:14px;font-size:9.5px;">Med Rec #</div>
<div class="a " style="left:501px;top:649px;width:105px;height:12.6px;background:#b9f5b9"></div>
<div class="a t" style="left:478px;top:649px;width:20.4px;height:10px;line-height:10.4px;font-size:8.8px;background:#1fe81f;border:1.4px solid #111;text-align:center;letter-spacing:-0.35px">Prime</div>
<div class="a t " style="left:505px;top:648.4px;height:14px;line-height:14px;font-size:9.1px;letter-spacing:0.25px">Yellowstone LLC</div>
<div class="a t " style="left:505px;top:661.5px;height:14px;line-height:14px;font-size:9.05px;color:#9a9a9a;letter-spacing:0.2px">Add New Location</div>
<div class="a t" style="left:606px;top:649px;width:46.6px;height:10.5px;line-height:11px;font-size:8.6px;background:#b9f5b9;border:1px solid #333;border-top-width:1.5px;padding-left:3px">3</div>
<div class="a" style="left:606px;top:661.5px;width:51.6px;height:13.5px;background:#fff;border:1px solid #333;border-top:none;border-bottom:none;box-sizing:border-box"></div>
<div class="a t b" style="left:658.5px;top:648.2px;height:14px;line-height:14px;font-size:12.5px;color:#e81010">x</div>
<div class="a " style="left:478px;top:675px;width:191px;height:1px;background:#e6e6e6"></div>
<div class="a " style="left:478px;top:688.6px;width:192px;height:1.3px;background:#888"></div>
<svg class="a" style="left:670.35px;top:652px" width="6.5" height="3.6"><polygon points="0,3.6 3.25,0 6.5,3.6" fill="#111"/></svg>
<svg class="a" style="left:670.35px;top:681px" width="6.5" height="3.6"><polygon points="0,0 3.25,3.6 6.5,0" fill="#111"/></svg>
<div class="a " style="left:685.2px;top:635px;width:134.8px;height:59.3px;background:#b2d0e0"></div>
<div class="a btn bb b" style="left:685.2px;top:635px;width:134.8px;height:18.8px;line-height:18.8px;font-size:9.15px;line-height:21px">Telephone Intake Form</div>
<div class="a btn bb b" style="left:685.2px;top:655.7px;width:134.8px;height:19px;line-height:19px;font-size:9.1px;line-height:21.5px">Print Patient Demographics</div>
<div class="a btn bb b" style="left:685.2px;top:676px;width:134.8px;height:18.3px;line-height:18.3px;font-size:9.2px;line-height:21.5px">Save As PDF: Demographics</div>
<div class="a btn bg b" style="left:824.7px;top:645.4px;width:91.8px;height:39.1px;line-height:39.1px;font-size:16.2px;line-height:41px">Continue</div>
</body></html>
